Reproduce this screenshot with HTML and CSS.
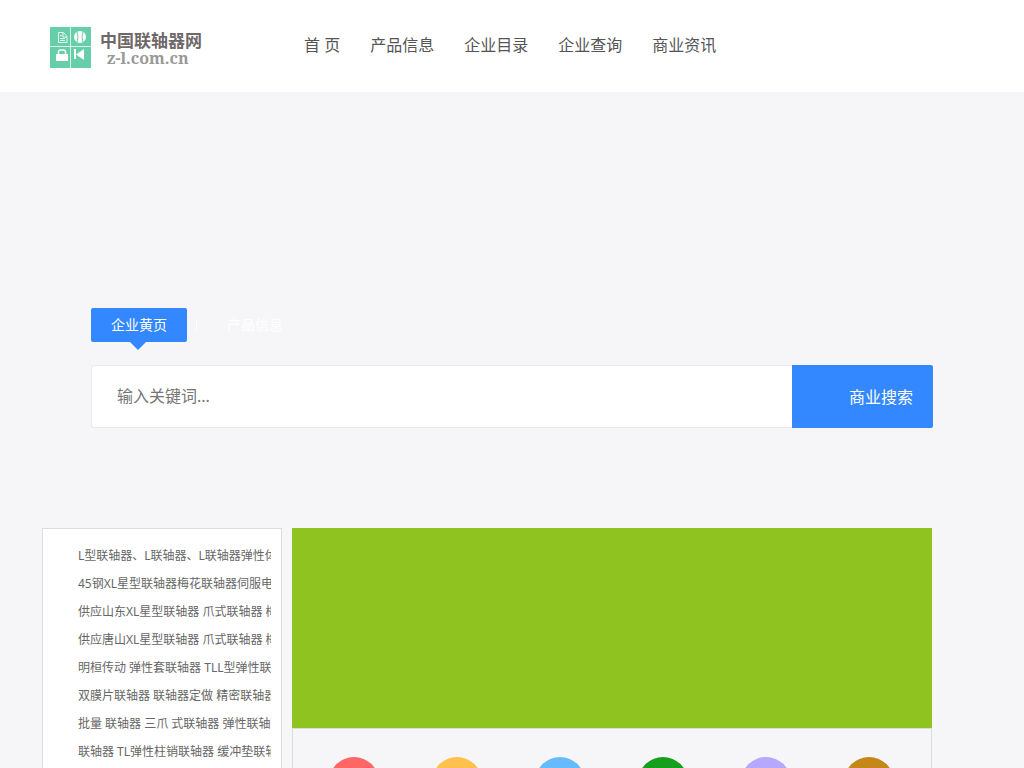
FILE: index.html
```html
<!DOCTYPE html>
<html lang="zh-CN">
<head>
<meta charset="utf-8">
<meta name="viewport" content="width=device-width, initial-scale=1">
<title>中国联轴器网</title>
<link rel="stylesheet" href="styles.css">
</head>
<body>
<header class="header">
  <a class="logo" href="#">
    <svg class="logo-mark" viewBox="0 0 41 41" aria-hidden="true">
      <path fill="#66cfa9" d="M0 0h41v41H0z"/>
      <path fill="#d9f4e9" d="M20 0h1v41h-1zM0 19h41v1H0z"/>
      <path fill="none" stroke="#e4f7ef" d="M8.500 5.500h5l3.500 4v6H8.500zM13 6v4h4M10 8.500h2M10 11.500h5M10 13.500h5"/>
      <circle cx="30" cy="10" r="6" fill="#fff"/>
      <path fill="none" stroke="#66cfa9" d="M27 5q2 5 0 10M33 5q-2 5 0 10"/>
      <path fill="#fff" d="M6 27h12v7H6z"/>
      <path fill="none" stroke="#fff" stroke-width="1.500" d="M8.500 27v-2q0-2 2-2h3q2 0 2 2v2"/>
      <path fill="#fff" d="M24 22h2v10h-2zM34 22v11l-8-5.500z"/>
    </svg>
    <span class="logo-text">
      <span class="logo-name">中国联轴器网</span>
      <span class="logo-domain">z-l.com.cn</span>
    </span>
  </a>
  <nav class="nav">
    <a href="#">首 页</a>
    <a href="#">产品信息</a>
    <a href="#">企业目录</a>
    <a href="#">企业查询</a>
    <a href="#">商业资讯</a>
  </nav>
</header>
<section class="hero">
  <div class="search">
    <div class="tabs">
      <button class="tab tab-active" type="button">企业黄页</button>
      <button class="tab" type="button">产品信息</button>
    </div>
    <form class="search-form">
      <input class="search-input" type="text" placeholder="输入关键词..." aria-label="输入关键词">
      <button class="search-button" type="submit">商业搜索</button>
    </form>
  </div>
</section>
<main class="main">
  <aside class="sidebar">
    <ul class="products">
      <li><a href="#">L型联轴器、L联轴器、L联轴器弹性体</a></li>
      <li><a href="#">45钢XL星型联轴器梅花联轴器伺服电机</a></li>
      <li><a href="#">供应山东XL星型联轴器 爪式联轴器 梅花</a></li>
      <li><a href="#">供应唐山XL星型联轴器 爪式联轴器 梅花</a></li>
      <li><a href="#">明桓传动 弹性套联轴器 TLL型弹性联轴器</a></li>
      <li><a href="#">双膜片联轴器 联轴器定做 精密联轴器</a></li>
      <li><a href="#">批量 联轴器 三爪 式联轴器 弹性联轴器</a></li>
      <li><a href="#">联轴器 TL弹性柱销联轴器 缓冲垫联轴器</a></li>
    </ul>
  </aside>
  <div class="content">
    <div class="banner"></div>
    <div class="categories">
      <span class="dot dot-red"></span>
      <span class="dot dot-amber"></span>
      <span class="dot dot-blue"></span>
      <span class="dot dot-green"></span>
      <span class="dot dot-violet"></span>
      <span class="dot dot-brown"></span>
    </div>
  </div>
</main>
</body>
</html>
```

FILE: styles.css
```css
* {
  box-sizing: border-box;
}

body {
  margin: 0;
  background: #f6f6f9;
  color: #555;
  font-family: "Noto Sans", "Noto Sans CJK SC", sans-serif;
  font-size: 12px;
}

a {
  color: inherit;
  text-decoration: none;
}

button,
input {
  font-family: inherit;
}

.header {
  display: flex;
  align-items: center;
  height: 92px;
  padding: 0 50px;
  background: #fff;
}

.logo {
  display: flex;
  align-items: center;
  gap: 9px;
  width: 254px;
  padding-top: 3px;
}

.logo-mark {
  width: 41px;
  height: 41px;
}

.logo-text {
  display: flex;
  flex-direction: column;
}

.logo-name {
  color: #6f6868;
  font-family: "Noto Sans CJK SC", sans-serif;
  font-size: 17px;
  font-weight: 700;
  line-height: 20px;
}

.logo-domain {
  padding-left: 7px;
  color: #999;
  font-family: "Noto Serif", "Liberation Serif", serif;
  font-size: 16px;
  font-weight: 700;
  line-height: 16px;
}

.nav {
  display: flex;
  gap: 30px;
  padding-bottom: 2px;
  font-size: 16px;
  line-height: 24px;
  white-space: nowrap;
}

.hero {
  padding: 216px 91px 100px;
}

.tabs {
  display: flex;
  margin-bottom: 23px;
}

.tab {
  position: relative;
  height: 34px;
  padding: 0 20px 2px;
  border: 0;
  border-radius: 2px;
  background: transparent;
  color: #fff;
  font-size: 14px;
}

.tab-active {
  margin-right: 20px;
  background: #3388ff;
}

.tab-active::before {
  content: "";
  position: absolute;
  top: 100%;
  left: 50%;
  margin-left: -9px;
  border: 8px solid transparent;
  border-top-color: #3388ff;
  border-bottom: 0;
}

.tab-active::after {
  content: "";
  position: absolute;
  top: 12px;
  left: 100%;
  width: 1px;
  height: 10px;
  margin-left: 9px;
  background: #fff;
}

.search-form {
  display: flex;
  height: 63px;
}

.search-input {
  flex: 1;
  min-width: 0;
  padding: 0 25px 2px;
  border: 1px solid #e8eaf1;
  border-right: 0;
  border-radius: 3px 0 0 3px;
  background: #fff;
  font-size: 16px;
}

.search-input::placeholder {
  color: #757575;
}

.search-button {
  padding: 0 20px 2px 57px;
  border: 0;
  border-radius: 0 2px 2px 0;
  background: #3388ff;
  color: #fff;
  font-size: 16px;
}

.main {
  display: flex;
  gap: 10px;
  padding: 0 92px 0 42px;
}

.sidebar {
  flex: 0 0 240px;
  min-width: 0;
  padding: 13px 10px 13px 35px;
  border: 1px solid #ddd;
  background: #fff;
}

.products {
  margin: 0;
  padding: 0;
  list-style: none;
}

.products li {
  overflow: hidden;
  color: #666;
  line-height: 28px;
  white-space: nowrap;
}

.content {
  flex: 1;
}

.banner {
  height: 200px;
  background: #8fc31f;
}

.categories {
  display: flex;
  padding: 28px 11px 28px 9px;
  border: 1px solid #ddd;
}

.dot {
  width: 50px;
  height: 50px;
  margin: 0 auto;
  border-radius: 50%;
}

.dot-red { background: #ff6666; }
.dot-amber { background: #ffc04d; }
.dot-blue { background: #66bbff; }
.dot-green { background: #159f1c; }
.dot-violet { background: #b5a8ff; }
.dot-brown { background: #c58717; }
```
